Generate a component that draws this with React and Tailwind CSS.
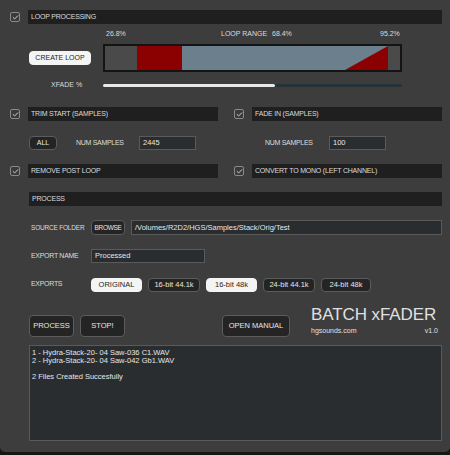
import { Check } from "lucide-react";

function Box() {
  return (
    <div className="flex h-[10px] w-[10px] shrink-0 items-center justify-center rounded-[2px] border border-[#8a8a8a] bg-[#3a3a3a]">
      <Check size={7} strokeWidth={3} className="text-[#e8e8e8]" />
    </div>
  );
}

function HeaderBar({ label, check = true }) {
  return (
    <div className="flex items-center gap-[8px]">
      {check && <Box />}
      <div className="flex h-[14px] flex-1 items-center bg-[#1f1f1f] pl-[3px] text-[7px] tracking-[-0.2px] text-[#dcdcdc]">
        {label}
      </div>
    </div>
  );
}

function Btn({ children, light, className = "" }) {
  return (
    <div
      className={
        "flex items-center justify-center whitespace-nowrap rounded-[4px] border " +
        (light
          ? "border-[#f4f4f4] bg-[#f4f4f4] text-[#1e1e1e] "
          : "border-[#5c5c5c] bg-[#242424] text-[#e6e6e6] ") +
        className
      }
    >
      {children}
    </div>
  );
}

function Field({ value, className = "" }) {
  return (
    <div
      className={
        "flex items-center whitespace-nowrap border border-[#5a5a5a] bg-[#2a2d30] pl-[3px] text-[7.5px] text-[#e6e6e6] " +
        className
      }
    >
      {value}
    </div>
  );
}

export default function App() {
  const exportsList = [
    { label: "ORIGINAL", on: true, w: "w-[51px]" },
    { label: "16-bit 44.1k", on: false, w: "w-[52px]" },
    { label: "16-bit 48k", on: true, w: "w-[51px]" },
    { label: "24-bit 44.1k", on: false, w: "w-[52px]" },
    { label: "24-bit 48k", on: false, w: "w-[50px]" },
  ];

  return (
    <div className="h-[455px] w-[450px] bg-[#161616]" style={{ fontFamily: '"Liberation Sans", Arial, sans-serif' }}>
      <div className="flex h-[452px] flex-col rounded-b-[5px] bg-[#3d3d3d] pl-[10px] pr-[8px] pt-[10px]">
        <HeaderBar label="LOOP PROCESSING" />

        <div className="ml-[19px] mt-[5px] grid grid-cols-[62px_299px] gap-x-[12px]">
          <div />
          <div className="relative h-[10px] text-[7px] text-[#dcdcdc]">
            <span className="absolute left-[3px] top-0">26.8%</span>
            <span className="absolute left-[118px] top-0">LOOP RANGE</span>
            <span className="absolute left-[169px] top-0">68.4%</span>
            <span className="absolute left-[277px] top-0">95.2%</span>
          </div>

          <div className="mt-[5px] flex items-center">
            <Btn light className="h-[14px] w-[62px] text-[7px]">CREATE LOOP</Btn>
          </div>
          <div className="mt-[5px] h-[28px] border-2 border-[#141414]">
            <svg width="295" height="24" viewBox="0 0 295 24" className="block">
              <rect x="0" y="0" width="32" height="24" fill="#4a4a4a" />
              <rect x="32" y="0" width="45" height="24" fill="#8b0000" />
              <rect x="77" y="0" width="206" height="24" fill="#6c7f8d" />
              <polygon points="240,24 283,0 283,24" fill="#8b0000" />
              <rect x="283" y="0" width="12" height="24" fill="#4a4a4a" />
            </svg>
          </div>

          <div className="mt-[9px] flex h-[8px] items-center pl-[22px] text-[7px] text-[#dcdcdc]">XFADE %</div>
          <div className="mt-[9px] flex h-[8px] items-center">
            <div className="flex h-[3px] w-full rounded-full bg-[#263138]">
              <div className="h-full w-[172px] rounded-full bg-[#e8e8e8]" />
            </div>
          </div>
        </div>

        <div className="mt-[18px] grid grid-cols-[208px_208px] gap-x-[16px]">
          <HeaderBar label="TRIM START (SAMPLES)" />
          <HeaderBar label="FADE IN (SAMPLES)" />

          <div className="mt-[15px] flex h-[14px] items-center pl-[19px]">
            <Btn className="h-[14px] w-[28px] text-[7px]">ALL</Btn>
            <span className="ml-[19px] w-[63px] text-[7px] tracking-[-0.3px] text-[#dcdcdc]">NUM SAMPLES</span>
            <Field value="2445" className="h-[14px] w-[57px]" />
          </div>
          <div className="mt-[15px] flex h-[14px] items-center pl-[31px]">
            <span className="w-[64px] text-[7px] tracking-[-0.3px] text-[#dcdcdc]">NUM SAMPLES</span>
            <Field value="100" className="h-[14px] w-[57px]" />
          </div>

          <div className="mt-[14px]">
            <HeaderBar label="REMOVE POST LOOP" />
          </div>
          <div className="mt-[14px]">
            <HeaderBar label="CONVERT TO MONO (LEFT CHANNEL)" />
          </div>
        </div>

        <div className="ml-[19px] mt-[14px]">
          <HeaderBar label="PROCESS" check={false} />
        </div>

        <div className="ml-[19px] mt-[14px] flex h-[15px] items-center text-[7px] text-[#dcdcdc]">
          <span className="w-[62px] whitespace-nowrap pl-[2px] text-[6.5px] tracking-[-0.2px]">SOURCE FOLDER</span>
          <Btn className="h-[15px] w-[34px] text-[6.5px] tracking-[-0.3px]">BROWSE</Btn>
          <Field value="/Volumes/R2D2/HGS/Samples/Stack/Orig/Test" className="ml-[6px] h-[15px] flex-1" />
        </div>

        <div className="ml-[19px] mt-[14px] flex h-[14px] items-center text-[7px] text-[#dcdcdc]">
          <span className="w-[62px] whitespace-nowrap pl-[2px] tracking-[-0.3px]">EXPORT NAME</span>
          <Field value="Processed" className="h-[14px] w-[114px]" />
        </div>

        <div className="ml-[19px] mt-[15px] flex h-[13px] items-center text-[7px] text-[#dcdcdc]">
          <span className="w-[62px] pl-[2px] tracking-[-0.3px]">EXPORTS</span>
          <div className="flex gap-[6px]">
            {exportsList.map((e) => (
              <Btn key={e.label} light={e.on} className={"h-[14px] text-[7.5px] " + e.w}>
                {e.label}
              </Btn>
            ))}
          </div>
        </div>

        <div className="ml-[19px] mt-[15px] flex items-start">
          <div className="mt-[9px] flex gap-[6px]">
            <Btn className="h-[22px] w-[45px] text-[7.5px]">PROCESS</Btn>
            <Btn className="h-[22px] w-[45px] text-[7.5px]">STOP!</Btn>
          </div>
          <Btn className="ml-[97px] mt-[9px] h-[22px] w-[68px] text-[7.5px]">OPEN MANUAL</Btn>
          <div className="ml-[21px] flex w-[127px] flex-col text-[#e0e0e0]">
            <div className="text-[17px] leading-[18px] tracking-[-0.1px]">BATCH xFADER</div>
            <div className="mt-[2px] flex justify-between text-[7px]">
              <span>hgsounds.com</span>
              <span>v1.0</span>
            </div>
          </div>
        </div>

        <div className="ml-[19px] mt-[8px] h-[96px] border border-[#5a5a5a] bg-[#2a2d30] px-[2px] pt-[3px] text-[7.5px] leading-[8px] text-[#e6e6e6]">
          <div>1 - Hydra-Stack-20- 04 Saw-036 C1.WAV</div>
          <div>2 - Hydra-Stack-20- 04 Saw-042 Gb1.WAV</div>
          <div className="mt-[8px]">2 Files Created Succesfully</div>
        </div>
      </div>
    </div>
  );
}
